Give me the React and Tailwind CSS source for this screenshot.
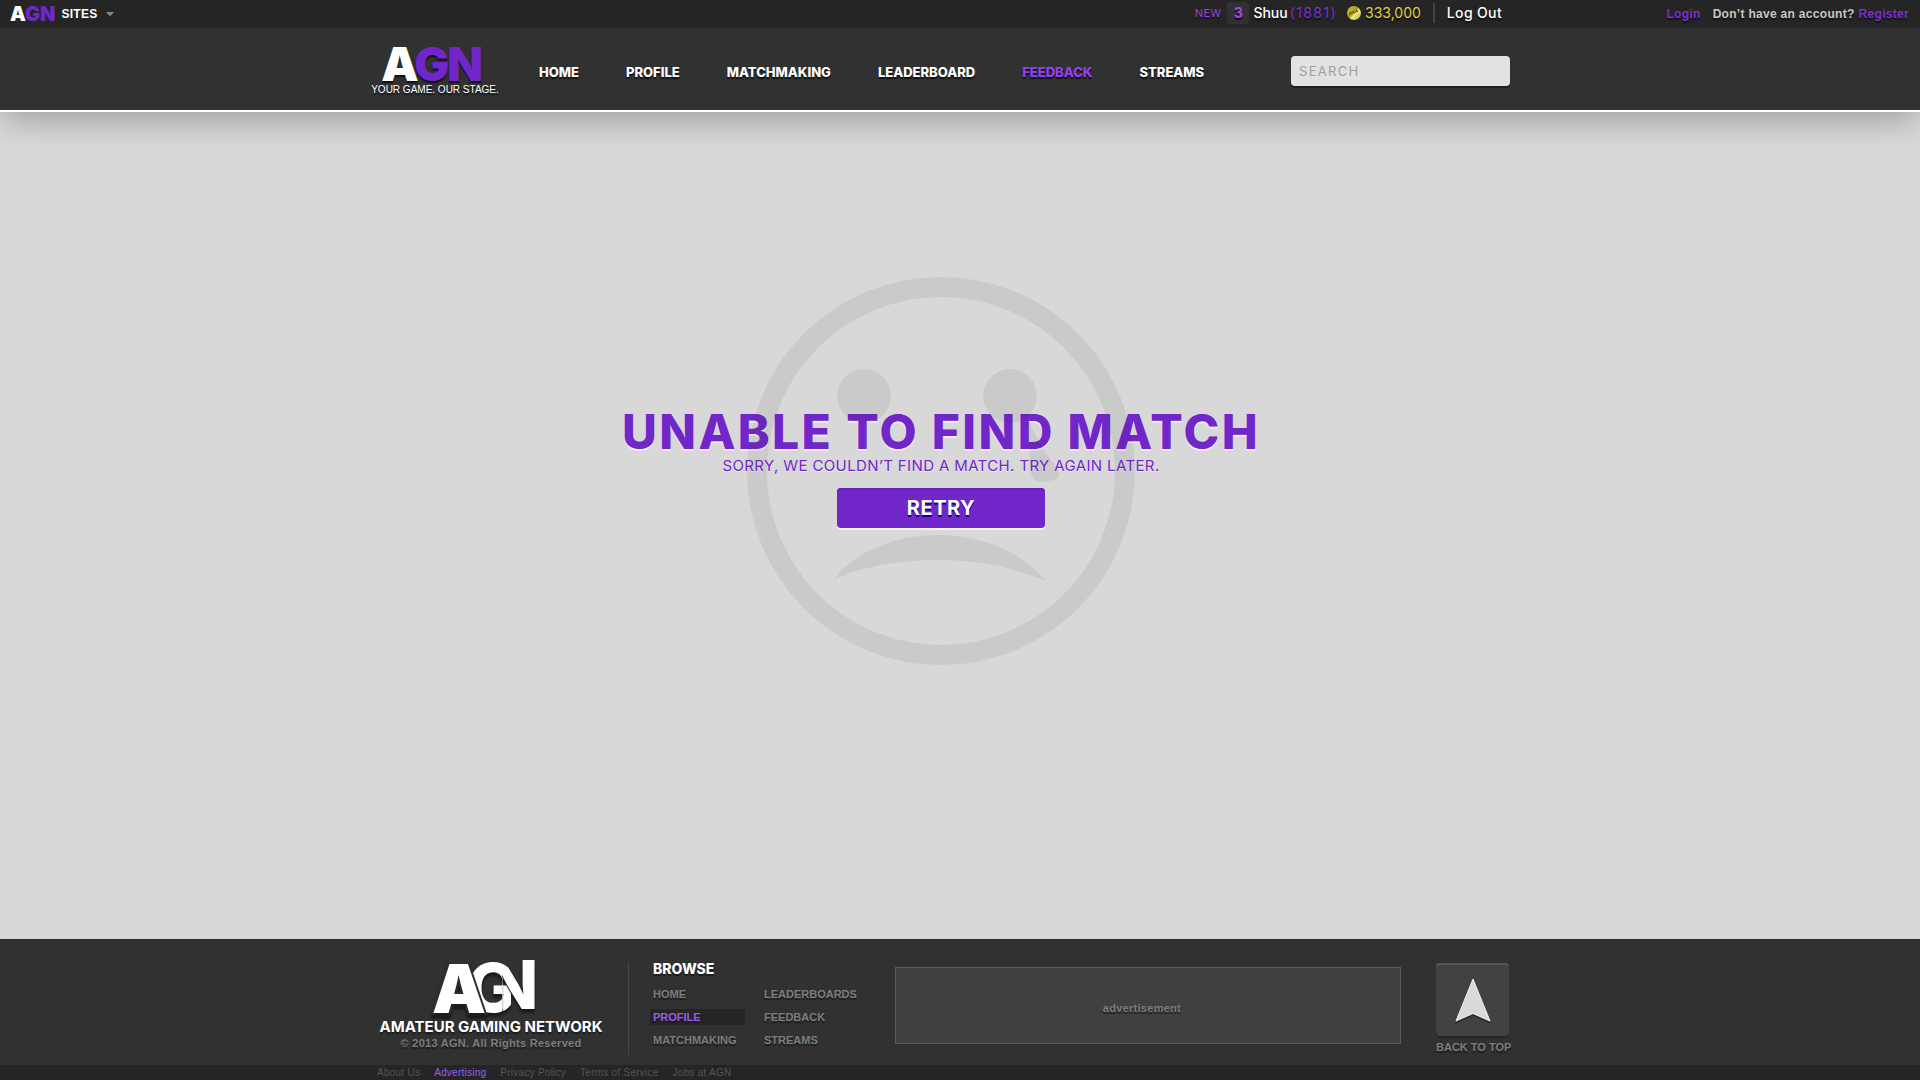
import React from "react";

const navLinks = ["HOME", "PROFILE", "MATCHMAKING", "LEADERBOARD", "FEEDBACK", "STREAMS"];
const browseLinks = ["HOME", "LEADERBOARDS", "PROFILE", "FEEDBACK", "MATCHMAKING", "STREAMS"];
const legalLinks = ["About Us", "Advertising", "Privacy Policy", "Terms of Service", "Jobs at AGN"];

function Monogram() {
  return (
    <svg viewBox="0 0 102 56" className="h-14 w-[102px] overflow-visible" role="img" aria-label="AGN">
      <defs>
        <clipPath id="n-part">
          <path d="M69 8H86V0H104V53H69Z" />
        </clipPath>
        <clipPath id="g-part">
          <path d="M30 0H70L82 20L78 26V56H30Z" />
        </clipPath>
      </defs>
      <g
        fontFamily="Inter, sans-serif"
        fill="#ffffff"
        className="drop-shadow-[0_2px_1px_#1c1c1c]"
      >
        <text x="34" y="53" fontSize="67" fontWeight="800" clipPath="url(#g-part)">G</text>
        <text x="54" y="50" fontSize="67" fontWeight="800" clipPath="url(#n-part)">N</text>
        <text x="-1" y="54" fontSize="68" fontWeight="900" stroke="#313131" strokeWidth="4" paintOrder="stroke">A</text>
      </g>
    </svg>
  );
}

function SadFace() {
  return (
    <svg viewBox="51 51 1164 1164" className="h-[388px] w-[388px]" fill="#282828" aria-hidden="true">
      <g opacity="0.07">
        <circle cx="633" cy="633" r="552" fill="none" stroke="#282828" strokeWidth="60" />
        <circle cx="402" cy="408" r="81" />
        <path d="M840 327a81 81 0 0 1 55 140V480L935 560L980 625Q988 638 986 648Q980 664 930 666Q903 665 900 620L893 470A81 81 0 1 1 840 327Z" />
        <path d="M311 957C380 870 500 825 625 825C760 825 885 880 948 964C850 920 740 900 625 900C510 900 400 920 311 957Z" />
      </g>
    </svg>
  );
}

function Coin() {
  return (
    <svg viewBox="0 0 14 14" className="h-3.5 w-3.5" aria-hidden="true">
      <defs>
        <linearGradient id="coin" x1="0" y1="0" x2="1" y2="1">
          <stop offset="0" stopColor="#e6d62e" />
          <stop offset="0.45" stopColor="#a3951c" />
          <stop offset="0.6" stopColor="#efe88e" />
          <stop offset="1" stopColor="#b5a520" />
        </linearGradient>
      </defs>
      <circle cx="7" cy="7" r="7" fill="url(#coin)" />
      <path d="M2.500 8.500L3.500 6L4.500 8M5.500 7.500L6.500 5.500L7.500 7M8.500 6.500L9.500 4.500L11 6" fill="none" stroke="#4d470e" strokeWidth="1" />
    </svg>
  );
}

function TopBar() {
  return (
    <div className="grid h-7 grid-cols-[1fr_minmax(0,1180px)_1fr] items-center bg-[#252525] [text-shadow:0_2px_1px_#111]">
      <button className="flex items-center pl-2.5 text-xs font-bold tracking-wide text-white">
        <span className="font-[Inter,sans-serif] text-xl font-black leading-6 tracking-normal">
          A<span className="text-[#7026c8]">GN</span>
        </span>
        <span className="ml-1.5">SITES</span>
        <svg viewBox="0 0 8 5" className="ml-2 h-[5px] w-2" aria-hidden="true">
          <path d="M0 0H8L4 4.500Z" fill="#858585" />
        </svg>
      </button>
      <div className="flex items-center justify-end whitespace-nowrap pb-0.5 pr-12 font-[Inter,sans-serif] text-sm font-medium leading-5 text-white">
        <a href="#new" className="flex items-center text-[11px] font-normal tracking-wide text-[#9d44e0]">
          NEW
          <span className="ml-1.5 flex h-[22px] w-[22px] items-center justify-center rounded bg-[#313131] text-sm font-extrabold">3</span>
        </a>
        <a href="#user" className="ml-1">
          Shuu
          <span className="ml-0.5 font-normal tracking-widest text-[#7d32d6]">(1881)</span>
        </a>
        <span className="ml-2.5 flex items-center gap-1 font-normal text-[#e3d136]">
          <Coin />
          333,000
        </span>
        <span className="mx-3 h-5 w-0.5 bg-[#444]" />
        <a href="#logout" className="tracking-wide">Log Out</a>
      </div>
      <div className="flex justify-end whitespace-nowrap pr-[11px] text-xs font-bold tracking-wide text-[#c8c8c8]">
        <a href="#login" className="mr-3 text-[#7d2fd2]">Login</a>
        <span>Don’t have an account?</span>
        <a href="#register" className="ml-1 text-[#7d2fd2]">Register</a>
      </div>
    </div>
  );
}

function Header() {
  return (
    <header className="relative bg-[#313131] shadow-[0_14px_28px_-4px_rgba(0,0,0,0.24)]">
      <TopBar />
      <div className="border-b-2 border-white">
        <div className="mx-auto flex h-[82px] max-w-[1180px] items-center pr-10">
          <a href="#top" className="flex w-[130px] flex-col items-center pt-0.5 text-white [text-shadow:0_2px_1px_#111]">
            <span className="pr-2 font-[Inter,sans-serif] text-[47px] font-black leading-10 tracking-tighter">
              A<span className="text-[#7026c8]">GN</span>
            </span>
            <span className="whitespace-nowrap text-[10px] leading-3">YOUR GAME. OUR STAGE.</span>
          </a>
          <nav className="ml-[39px] flex gap-[47px] pt-1.5 font-[Inter,sans-serif] text-[13px] font-extrabold leading-4 text-white [text-shadow:0_2px_1px_#111]">
            {navLinks.map((label) => (
              <a key={label} href={"#" + label.toLowerCase()} className={label === "FEEDBACK" ? "text-[#9340f0]" : ""}>
                {label}
              </a>
            ))}
          </nav>
          <input
            type="search"
            aria-label="Search"
            placeholder="SEARCH"
            className="ml-auto mt-1 h-[30px] w-[219px] rounded bg-[#e2e2e2] px-2 font-[Inter,sans-serif] text-[13px] tracking-widest shadow-[0_2px_0_#1f1f1f] placeholder:text-[#a0a0a0]"
          />
        </div>
      </div>
    </header>
  );
}

function NoMatch() {
  return (
    <main className="mx-auto grid w-full max-w-[1180px] grow grid-cols-1 place-items-center pb-[109px] pr-[38px]">
      <div className="col-start-1 row-start-1 flex flex-col items-center pb-1.5 font-[Inter,sans-serif] text-[#7026c8]">
        <h1 className="text-5xl font-extrabold tracking-wider [text-shadow:0_2px_0_#f0eaf6]">UNABLE TO FIND MATCH</h1>
        <p className="text-[15px] leading-5 tracking-wide [text-shadow:0_1px_0_#f0e8fa]">
          SORRY, WE COULDN’T FIND A MATCH. TRY AGAIN LATER.
        </p>
        <button className="z-10 mt-3 h-10 w-52 rounded bg-[#7026c8] text-xl font-bold tracking-wide text-white shadow-[inset_0_2px_0_#6822bc,0_2px_0_#f6f0fc] [text-shadow:0_2px_0_#10008a]">
          RETRY
        </button>
      </div>
      <div className="pointer-events-none col-start-1 row-start-1">
        <SadFace />
      </div>
    </main>
  );
}

function Footer() {
  return (
    <footer className="bg-[#313131]">
      <div className="mx-auto flex h-[126px] max-w-[1180px] items-start pr-9 [text-shadow:0_2px_1px_#1c1c1c]">
        <div className="mt-5 flex w-[242px] flex-col items-center">
          <div className="pr-3.5">
            <Monogram />
          </div>
          <p className="mt-0.5 whitespace-nowrap font-[Inter,sans-serif] text-[15px] font-bold leading-5 text-white">AMATEUR GAMING NETWORK</p>
          <p className="whitespace-nowrap text-[11px] font-bold leading-3 tracking-wide text-[#7d7d7d]">© 2013 AGN. All Rights Reserved</p>
        </div>
        <div className="ml-4 mt-[23px] h-[93px] w-px bg-[#474747]" />
        <nav className="ml-[21px] mt-5" aria-label="Browse">
          <h2 className="pl-[3px] font-[Inter,sans-serif] text-sm font-extrabold leading-5 text-white">BROWSE</h2>
          <div className="mt-[7px] grid grid-cols-[95px_1fr] gap-x-4 gap-y-[7px] text-[11px] font-bold leading-4 text-[#7d7d7d]">
            {browseLinks.map((label) => (
              <a
                key={label}
                href={"#" + label.toLowerCase()}
                className={label === "PROFILE" ? "bg-[#252525] pl-[3px] text-[#9c5ce8]" : "pl-[3px]"}
              >
                {label}
              </a>
            ))}
          </div>
        </nav>
        <div className="ml-[38px] mt-7 flex h-[77px] grow items-center justify-center border border-[#5c5c5c] bg-[#404040] pr-3 pt-1.5 text-[11px] font-bold tracking-wide text-[#7d7d7d]">
          advertisement
        </div>
        <a href="#top" className="ml-[35px] mt-6 flex w-[78px] flex-col text-[11px] font-bold leading-4 text-[#7d7d7d]">
          <span className="flex h-[73px] w-[73px] items-center justify-center rounded bg-[#424242] shadow-[inset_0_2px_0_#585858,0_2px_0_#252525]">
            <svg viewBox="0 0 36 44" className="h-11 w-9 overflow-visible" aria-hidden="true">
              <path d="M18 3L36 46L18 38L0 46Z" fill="#2c2c2c" />
              <path d="M18 1L35 43L18 35.500L1 43Z" fill="#d9d9d9" stroke="#f2f2f2" />
            </svg>
          </span>
          <span className="mt-[3px] whitespace-nowrap">BACK TO TOP</span>
        </a>
      </div>
      <div className="bg-[#252525]">
        <nav aria-label="Legal" className="mx-auto flex max-w-[1180px] gap-3.5 pl-[7px] text-[10px] leading-[15px] tracking-wide text-[#555]">
          {legalLinks.map((label) => (
            <a key={label} href={"#" + label.toLowerCase().replaceAll(" ", "-")} className={label === "Advertising" ? "text-[#9c5ce8]" : ""}>
              {label}
            </a>
          ))}
        </nav>
      </div>
    </footer>
  );
}

export default function App() {
  return (
    <div id="top" className="flex min-h-screen flex-col bg-[#d8d8d8] font-['Liberation_Sans',Arial,sans-serif]">
      <Header />
      <NoMatch />
      <Footer />
    </div>
  );
}
